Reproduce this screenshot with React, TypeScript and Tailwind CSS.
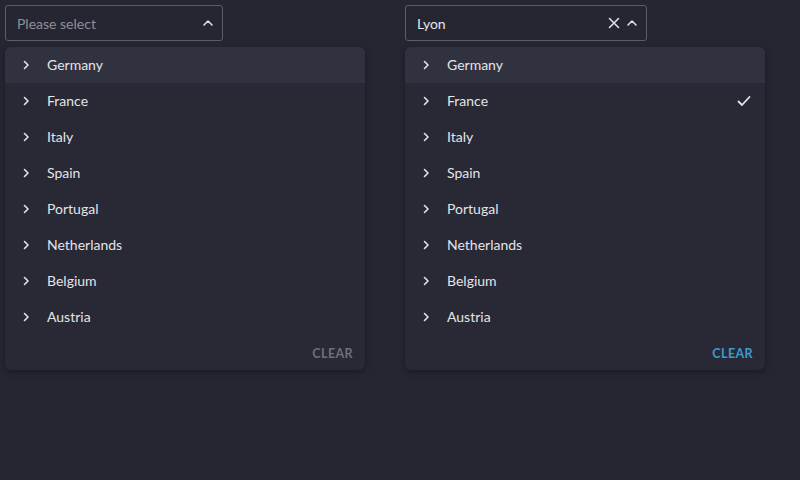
import React from 'react';

const COUNTRIES = ['Germany', 'France', 'Italy', 'Spain', 'Portugal', 'Netherlands', 'Belgium', 'Austria'];

const Chevron = ({ dir }: { dir: 'right' | 'up' }) => (
  <svg width="12" height="12" viewBox="0 0 12 12" fill="none" stroke="currentColor" strokeWidth="1.6" strokeLinecap="round" strokeLinejoin="round">
    {dir === 'right' ? <path d="M4.5 2.5 8 6l-3.5 3.5" /> : <path d="M2 8 6 4l4 4" />}
  </svg>
);

const Picker = ({ value, selected }: { value?: string; selected?: string }) => (
  <div className="flex flex-col gap-[6px]">
    <div
      className={`h-[36px] flex items-center pl-[11px] pr-[8px] border border-[#5c5d68] rounded-[3px] text-[14px] ${
        value ? 'w-[242px] text-[#e6e6ea]' : 'w-[218px] text-[#8d8e98]'
      }`}
    >
      <span className="flex-1">{value ?? 'Please select'}</span>
      {value && (
        <svg width="12" height="12" viewBox="0 0 12 12" className="mr-[6px] text-[#e0e0e4]" stroke="currentColor" strokeWidth="1.6" strokeLinecap="round">
          <path d="M1.5 1.5l9 9M10.5 1.5l-9 9" />
        </svg>
      )}
      <span className="text-[#e0e0e4]">
        <Chevron dir="up" />
      </span>
    </div>
    <div className="w-[360px] bg-[#282935] rounded-[6px] shadow-[0_2px_6px_rgba(0,0,0,0.35)] overflow-hidden">
      {COUNTRIES.map((c, i) => (
        <div key={c} className={`h-[36px] flex items-center pl-[15px] pr-[14px] text-[14px] text-[#e4e4e8] ${i === 0 ? 'bg-[#31323f]' : ''}`}>
          <Chevron dir="right" />
          <span className="ml-[15px] flex-1 -translate-y-[1px]">{c}</span>
          {selected === c && (
            <svg width="14" height="12" viewBox="0 0 14 12" fill="none" stroke="#e4e4e8" strokeWidth="1.8" strokeLinecap="round" strokeLinejoin="round">
              <path d="M1.5 6.5 5 10l7.5-8" />
            </svg>
          )}
        </div>
      ))}
      <div className="h-[35px] flex items-center justify-end pr-[12px]">
        <span className={`text-[12.5px] font-bold tracking-[0.4px] translate-y-[2px] ${selected ? 'text-[#3d9ccf]' : 'text-[#6e6f7a]'}`}>CLEAR</span>
      </div>
    </div>
  </div>
);

export default function App() {
  return (
    <div className="w-[800px] h-[480px] bg-[#262633] flex gap-[40px] p-[5px]" style={{ fontFamily: 'Lato, "Noto Sans", sans-serif' }}>
      <Picker />
      <Picker value="Lyon" selected="France" />
    </div>
  );
}
